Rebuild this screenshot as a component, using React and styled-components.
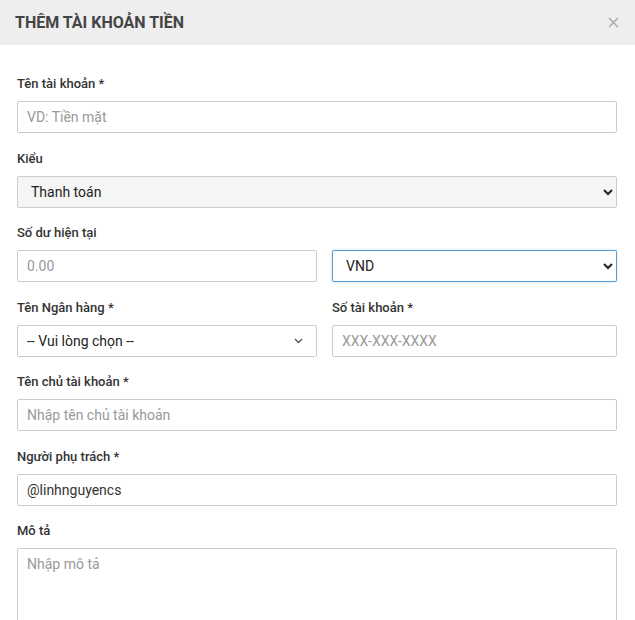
import React from 'react';
import styled, { createGlobalStyle } from 'styled-components';

const GlobalStyle = createGlobalStyle`
    html, body {
        margin: 0;
        padding: 0;
        background: #ffffff;
        font-family: Roboto, 'Liberation Sans', sans-serif;
    }
`;

const Modal = styled.div`
    width: 635px;
    height: 620px;
    overflow: hidden;
    background: #ffffff;
`;

const Header = styled.div`
    height: 45px;
    background: #eeeeee;
    display: flex;
    align-items: center;
    justify-content: space-between;
    padding: 0 16px 0 15px;
    box-sizing: border-box;

    h2 {
        margin: 0;
        font-size: 16px;
        font-weight: 700;
        color: #444444;
    }
`;

const Close = styled.button`
    border: none;
    background: none;
    padding: 0;
    width: 12px;
    height: 12px;
    display: flex;
    align-items: center;
    justify-content: center;
    cursor: pointer;

    svg {
        width: 11px;
        height: 11px;
        stroke: #aaaaaa;
        stroke-width: 1.3;
    }
`;

const Body = styled.div`
    padding: 31px 18px 0 17px;
    display: flex;
    flex-direction: column;
    gap: 17.5px;
`;

const Row = styled.div`
    display: grid;
    grid-template-columns: 300px 1fr;
    column-gap: 15px;
`;

const Field = styled.div`
    display: flex;
    flex-direction: column;
    gap: 9px;
`;

const Label = styled.label`
    font-size: 13px;
    font-weight: 500;
    color: #333333;
    line-height: 16px;
`;

const Input = styled.input`
    height: 32px;
    box-sizing: border-box;
    border: 1px solid #cccccc;
    border-radius: 2px;
    padding: 0 9px;
    font-family: Roboto, 'Liberation Sans', sans-serif;
    font-size: 14px;
    color: #333333;
    outline: none;

    &::placeholder {
        color: #999999;
    }
`;

const Select = styled.select`
    height: 32px;
    box-sizing: border-box;
    border: 1px solid ${props => props.focused ? '#5b9dd9' : '#cccccc'};
    box-shadow: ${props => props.focused ? '0 0 2px rgba(91, 157, 217, 0.5)' : 'none'};
    border-radius: 2px;
    padding: 0 6px 0 9px;
    background-color: ${props => props.focused ? '#ffffff' : '#f5f5f5'};
    font-family: Roboto, 'Liberation Sans', sans-serif;
    font-size: 14px;
    color: #222222;
    outline: none;
`;

const Picker = styled.div`
    height: 32px;
    box-sizing: border-box;
    border: 1px solid #cccccc;
    border-radius: 2px;
    padding: 0 13px 0 9px;
    display: flex;
    align-items: center;
    justify-content: space-between;
    font-size: 14px;
    color: #222222;
    cursor: pointer;

    svg {
        width: 9px;
        height: 6px;
        stroke: #555555;
        stroke-width: 1.4;
        fill: none;
    }
`;

const TextArea = styled.textarea`
    height: 110px;
    box-sizing: border-box;
    border: 1px solid #cccccc;
    border-radius: 2px;
    padding: 7px 9px;
    font-family: Roboto, 'Liberation Sans', sans-serif;
    font-size: 14px;
    color: #333333;
    resize: none;
    outline: none;

    &::placeholder {
        color: #999999;
    }
`;

const App = () => {
    return (
        <Modal>
            <GlobalStyle />
            <Header>
                <h2>THÊM TÀI KHOẢN TIỀN</h2>
                <Close>
                    <svg viewBox="0 0 10 10">
                        <path d="M1 1 L9 9 M9 1 L1 9" />
                    </svg>
                </Close>
            </Header>
            <Body>
                <Field>
                    <Label>Tên tài khoản *</Label>
                    <Input placeholder="VD: Tiền mặt" />
                </Field>
                <Field>
                    <Label>Kiểu</Label>
                    <Select defaultValue="pay">
                        <option value="pay">Thanh toán</option>
                        <option value="save">Tiết kiệm</option>
                    </Select>
                </Field>
                <Field>
                    <Label>Số dư hiện tại</Label>
                    <Row>
                        <Input placeholder="0.00" />
                        <Select focused defaultValue="VND">
                            <option value="VND">VND</option>
                            <option value="USD">USD</option>
                        </Select>
                    </Row>
                </Field>
                <Row>
                    <Field>
                        <Label>Tên Ngân hàng *</Label>
                        <Picker>
                            <span>-- Vui lòng chọn --</span>
                            <svg viewBox="0 0 9 6">
                                <path d="M1 1 L4.5 4.5 L8 1" />
                            </svg>
                        </Picker>
                    </Field>
                    <Field>
                        <Label>Số tài khoản *</Label>
                        <Input placeholder="XXX-XXX-XXXX" />
                    </Field>
                </Row>
                <Field>
                    <Label>Tên chủ tài khoản *</Label>
                    <Input placeholder="Nhập tên chủ tài khoản" />
                </Field>
                <Field>
                    <Label>Người phụ trách *</Label>
                    <Input defaultValue="@linhnguyencs" />
                </Field>
                <Field>
                    <Label>Mô tả</Label>
                    <TextArea placeholder="Nhập mô tả" />
                </Field>
            </Body>
        </Modal>
    );
};

export default App;
